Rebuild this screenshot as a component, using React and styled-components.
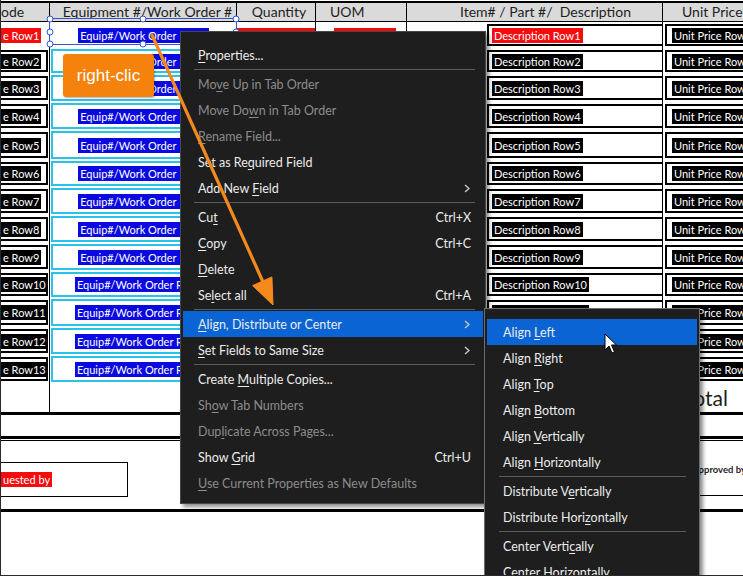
import React from "react";
import styled, { createGlobalStyle } from "styled-components";

const GlobalStyle = createGlobalStyle`
  html, body {
    margin: 0;
    padding: 0;
    background: #fff;
  }
  body {
    font-family: Lato, "Liberation Sans", sans-serif;
  }
`;

const COLS = "49px 187px 79px 91px 256px 80px";

const Page = styled.div`
  position: relative;
  width: 743px;
  height: 576px;
  overflow: hidden;
  background: #fff;
  box-sizing: border-box;
  border-left: 1px solid #2a2a2a;
  border-bottom: 1px solid #2a2a2a;
`;

const Header = styled.div`
  display: grid;
  grid-template-columns: ${COLS};
  margin-top: 1px;
  height: 21px;
  box-sizing: border-box;
  border-top: 2px solid #000;
  border-bottom: 1px solid #000;
  background: #dadada;
`;

const HeadCell = styled.div`
  border-right: ${({ $last }) => ($last ? "none" : "1px solid #000")};
  font-size: 14px;
  line-height: 18px;
  color: #1e1e1e;
  white-space: pre;
  overflow: hidden;
  text-align: ${({ $align }) => $align || "center"};
  padding-left: ${({ $pad }) => $pad || 0}px;
`;

const Row = styled.div`
  display: grid;
  grid-template-columns: ${COLS};
  height: ${({ $h }) => $h}px;
`;

const Cell = styled.div`
  display: flex;
  align-items: center;
  justify-content: ${({ $justify }) => $justify || "flex-start"};
  min-width: 0;
  overflow: hidden;
  box-sizing: border-box;
  border-right: ${({ $last }) => ($last ? "none" : "1px solid #000")};
  padding-left: ${({ $pad }) => $pad || 0}px;
`;

const CodeBox = styled.div`
  flex: 1;
  align-self: stretch;
  display: flex;
  align-items: center;
  margin: 2px 1px 2px 0;
  border: 2px solid ${({ $plain }) => ($plain ? "transparent" : "#000")};
  border-left: none;
  overflow: hidden;
`;

const EquipBox = styled.div`
  flex: 1;
  align-self: stretch;
  display: flex;
  align-items: center;
  justify-content: center;
  margin: 1px 0 1px 1px;
  border: 2.5px solid ${({ $plain }) => ($plain ? "transparent" : "#29c2e9")};
  overflow: hidden;
`;

const DescBox = styled.div`
  flex: 1;
  align-self: stretch;
  display: flex;
  align-items: center;
  margin: 2px 0 2px 80px;
  padding-left: 3px;
  border: 2px solid #000;
  border-right: none;
  overflow: hidden;
`;

const PriceBox = styled.div`
  flex: 1;
  align-self: stretch;
  display: flex;
  align-items: center;
  margin: 2px 0 2px 2px;
  padding-left: 5px;
  border: 2px solid #000;
  border-right: none;
  overflow: hidden;
`;

const Label = styled.span`
  background: ${({ $tone }) => $tone};
  color: #fff;
  font-size: 11px;
  line-height: 15px;
  padding: 0 2px;
  white-space: nowrap;
`;

const TotalRow = styled.div`
  display: grid;
  grid-template-columns: 49px 1fr;
  height: 32px;
  box-sizing: border-box;
  border-bottom: 3px solid #000;
`;

const TotalSide = styled.div`
  border-right: 1px solid #000;
`;

const TotalText = styled.div`
  text-align: right;
  padding-right: 15px;
  font-size: 21px;
  line-height: 29px;
  color: #1e1e1e;
`;

const Spacer = styled.div`
  height: 21px;
`;

const DoubleRule = styled.div`
  height: 1px;
  border-top: 3px solid #000;
  border-bottom: 1px solid #000;
`;

const SignRow = styled.div`
  display: flex;
  justify-content: space-between;
  align-items: flex-start;
  height: 71px;
  box-sizing: border-box;
  border-bottom: 3px solid #000;
`;

const RequestBox = styled.div`
  margin-top: 21px;
  width: 127px;
  height: 35px;
  box-sizing: border-box;
  border: 1px solid #000;
  border-left: none;
  display: flex;
  align-items: center;
`;

const ApproveBox = styled.div`
  width: 150px;
  height: 55px;
  box-sizing: border-box;
  border-bottom: 1px solid #000;
  padding: 23px 0 0 99px;
  font-size: 9.5px;
  font-weight: 700;
  line-height: 12px;
  color: #1e1e1e;
  white-space: nowrap;
  overflow: hidden;
`;

/* overlays */

const Selection = styled.div`
  position: absolute;
  left: 48px;
  top: 18px;
  width: 188px;
  height: 27px;
  box-sizing: border-box;
  border: 1.5px solid #2f55d4;
`;

const Handle = styled.span`
  position: absolute;
  left: ${({ $x }) => $x};
  top: ${({ $y }) => $y};
  width: 7px;
  height: 7px;
  box-sizing: border-box;
  border-radius: 50%;
  background: #fff;
  border: 1.5px solid #2f55d4;
  transform: translate(-50%, -50%);
`;

const Callout = styled.div`
  position: absolute;
  left: 62px;
  top: 54px;
  width: 91px;
  height: 43px;
  border-radius: 3px;
  background: #f5820d;
  color: #fff;
  font-family: "Liberation Sans", Arial, sans-serif;
  font-size: 17px;
  display: flex;
  align-items: center;
  justify-content: center;
  box-shadow: 1px 1px 2px rgba(0, 0, 0, 0.3);
  z-index: 5;
`;

const Overlay = styled.svg`
  position: absolute;
  left: -1px;
  top: 0;
  pointer-events: none;
  z-index: ${({ $z }) => $z};
`;

const Menu = styled.div`
  position: absolute;
  left: ${({ $x }) => $x}px;
  top: ${({ $y }) => $y}px;
  width: ${({ $w }) => $w}px;
  box-sizing: border-box;
  padding: 10px 0 7px;
  background: #1e1e1e;
  border: 1px solid ${({ $edge }) => $edge};
  box-shadow: 3px 3px 4px rgba(0, 0, 0, 0.45);
  font-family: Lato, "Open Sans", sans-serif;
  font-size: 12.5px;
  z-index: ${({ $z }) => $z};
`;

const Item = styled.div`
  display: flex;
  align-items: center;
  height: 26px;
  margin: 0 2px;
  padding: 0 12px 0 ${({ $indent }) => $indent}px;
  background: ${({ $active }) => ($active ? "#0b64d4" : "transparent")};
  color: ${({ $disabled }) => ($disabled ? "#8c8c8c" : "#ececec")};
  white-space: nowrap;
`;

const ItemText = styled.span`
  flex: 1;
`;

const Mn = styled.span`
  text-decoration: underline;
  text-underline-offset: 2px;
`;

const Shortcut = styled.span`
  color: #ececec;
`;

const Sep = styled.div`
  height: 1px;
  margin: 1px ${({ $r }) => $r}px 1px ${({ $l }) => $l}px;
  background: #5b5b5b;
`;

const Chevron = () => (
  <svg width="6" height="9" viewBox="0 0 6 9" style={{ marginRight: 1 }}>
    <path d="M1 1 L5 4.5 L1 8" fill="none" stroke="#c8c8c8" strokeWidth="1.4" />
  </svg>
);

const Cursor = styled.svg`
  position: absolute;
  left: 603px;
  top: 333px;
  z-index: 9;
`;

const heights = [26, 26, 28, 28, 30, 27, 28, 28, 28, 27, 29, 28, 28];

const menuItems = [
  { label: "Properties...", u: 0 },
  "sep",
  { label: "Move Up in Tab Order", u: 2, disabled: true },
  { label: "Move Down in Tab Order", u: 7, disabled: true },
  { label: "Rename Field...", u: 0, disabled: true },
  { label: "Set as Required Field", u: 9 },
  { label: "Add New Field", u: 8, sub: true },
  "sep",
  { label: "Cut", u: 2, key: "Ctrl+X" },
  { label: "Copy", u: 0, key: "Ctrl+C" },
  { label: "Delete", u: 0 },
  { label: "Select all", u: 2, key: "Ctrl+A" },
  "sep",
  { label: "Align, Distribute or Center", u: 0, sub: true, active: true },
  { label: "Set Fields to Same Size", u: 0, sub: true },
  "sep",
  { label: "Create Multiple Copies...", u: 7 },
  { label: "Show Tab Numbers", u: 2, disabled: true },
  { label: "Duplicate Across Pages...", u: 3, disabled: true },
  { label: "Show Grid", u: 5, key: "Ctrl+U" },
  { label: "Use Current Properties as New Defaults", u: 0, disabled: true },
];

const subItems = [
  { label: "Align Left", u: 6, active: true },
  { label: "Align Right", u: 6 },
  { label: "Align Top", u: 6 },
  { label: "Align Bottom", u: 6 },
  { label: "Align Vertically", u: 6 },
  { label: "Align Horizontally", u: 6 },
  "sep",
  { label: "Distribute Vertically", u: 12 },
  { label: "Distribute Horizontally", u: 15 },
  "sep",
  { label: "Center Vertically", u: 12 },
  { label: "Center Horizontally", u: -1 },
];

const Mnemonic = ({ text, u }) => {
  if (u < 0) return text;
  return (
    <>
      {text.slice(0, u)}
      <Mn>{text[u]}</Mn>
      {text.slice(u + 1)}
    </>
  );
};

const MenuList = ({ items, indent, sepL, sepR }) =>
  items.map((it, i) =>
    it === "sep" ? (
      <Sep key={i} $l={sepL} $r={sepR} />
    ) : (
      <Item key={i} $indent={indent} $active={it.active} $disabled={it.disabled}>
        <ItemText>
          <Mnemonic text={it.label} u={it.u} />
        </ItemText>
        {it.key && <Shortcut>{it.key}</Shortcut>}
        {it.sub && <Chevron />}
      </Item>
    )
  );

const RED = "#f50d0d";
const BLACK = "#000";
const BLUE = "#0a0ae0";

const FormRow = ({ n, h }) => {
  const first = n === 1;
  return (
    <Row $h={h}>
      <Cell>
        <CodeBox $plain={first}>
          <Label $tone={first ? RED : BLACK}>e Row{n}</Label>
        </CodeBox>
      </Cell>
      <Cell>
        <EquipBox $plain={first}>
          <Label $tone={BLUE}>Equip#/Work Order Row{n}</Label>
        </EquipBox>
      </Cell>
      <Cell $justify="center">
        <Label $tone={first ? RED : BLACK}>Quantity Row{n}</Label>
      </Cell>
      <Cell $pad={18}>
        <Label $tone={first ? RED : BLACK}>UOM Row{n}</Label>
      </Cell>
      <Cell>
        <DescBox>
          <Label $tone={first ? RED : BLACK}>Description Row{n}</Label>
        </DescBox>
      </Cell>
      <Cell $last>
        <PriceBox>
          <Label $tone={BLACK}>Unit Price Row{n}</Label>
        </PriceBox>
      </Cell>
    </Row>
  );
};

const handles = [
  ["0%", "0%"],
  ["50%", "0%"],
  ["100%", "0%"],
  ["0%", "50%"],
  ["100%", "50%"],
  ["0%", "100%"],
  ["50%", "100%"],
  ["100%", "100%"],
];

export default function App() {
  return (
    <>
      <GlobalStyle />
      <Page>
        <Header>
          <HeadCell $align="left">ode</HeadCell>
          <HeadCell $pad={9}>Equipment #/Work Order #</HeadCell>
          <HeadCell $pad={6}>Quantity</HeadCell>
          <HeadCell $align="left" $pad={14}>UOM</HeadCell>
          <HeadCell $pad={22}>{"Item# / Part #/  Description"}</HeadCell>
          <HeadCell $align="left" $pad={19} $last>Unit Price</HeadCell>
        </Header>

        {heights.map((h, i) => (
          <FormRow key={i} n={i + 1} h={h} />
        ))}

        <TotalRow>
          <TotalSide />
          <TotalText>Total</TotalText>
        </TotalRow>
        <Spacer />
        <DoubleRule />
        <SignRow>
          <RequestBox>
            <Label $tone={RED}>uested by</Label>
          </RequestBox>
          <ApproveBox>Approved by</ApproveBox>
        </SignRow>

        <Selection>
          {handles.map(([x, y], i) => (
            <Handle key={i} $x={x} $y={y} />
          ))}
        </Selection>

        <Callout>right-clic</Callout>

        <Menu $x={179} $y={31} $w={306} $edge="#474747" $z={3}>
          <MenuList items={menuItems} indent={15} sepL={13} sepR={10} />
        </Menu>

        <Menu $x={483} $y={308} $w={216} $edge="#6e6e6e" $z={4}>
          <MenuList items={subItems} indent={16} sepL={14} sepR={13} />
        </Menu>

        <Overlay width="743" height="576" $z={6}>
          <line x1="152" y1="35" x2="263" y2="282" stroke="#f58a1c" strokeWidth="3.2" strokeLinecap="round" />
          <polygon points="273,305 252.6,285.6 271.9,276.9" fill="#f58a1c" stroke="#f58a1c" strokeWidth="1" strokeLinejoin="round" />
        </Overlay>

        <Cursor width="14" height="22" viewBox="0 0 14 22">
          <path d="M1 1 L1 17 L5 13 L8 20 L10.5 19 L7.5 12 L12.5 12 Z" fill="#fff" stroke="#000" strokeWidth="1" strokeLinejoin="round" />
        </Cursor>
      </Page>
    </>
  );
}
